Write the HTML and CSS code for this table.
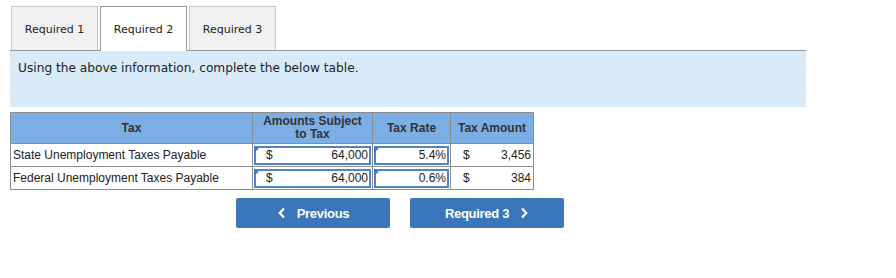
FILE: index.html
```html
<!DOCTYPE html>
<html>
<head>
<meta charset="utf-8">
<link rel="stylesheet" href="styles.css">
</head>
<body>
<div class="page">
  <div class="tabs">
    <div class="tab">Required 1</div>
    <div class="tab active">Required 2</div>
    <div class="tab">Required 3</div>
  </div>
  <div class="panel">Using the above information, complete the below table.</div>
  <table class="grid">
    <colgroup>
      <col class="c1"><col class="c2"><col class="c3"><col class="c4">
    </colgroup>
    <thead>
      <tr>
        <th>Tax</th>
        <th class="two">Amounts Subject<br>to Tax</th>
        <th>Tax Rate</th>
        <th>Tax Amount</th>
      </tr>
    </thead>
    <tbody>
      <tr>
        <td class="label">State Unemployment Taxes Payable</td>
        <td class="in"><div class="box"><span class="flag"></span><span class="cur">$</span><span class="num">64,000</span></div></td>
        <td class="in"><div class="box"><span class="flag"></span><span class="num">5.4%</span></div></td>
        <td class="out"><div class="val"><span class="cur">$</span><span class="num">3,456</span></div></td>
      </tr>
      <tr>
        <td class="label">Federal Unemployment Taxes Payable</td>
        <td class="in"><div class="box"><span class="flag"></span><span class="cur">$</span><span class="num">64,000</span></div></td>
        <td class="in"><div class="box"><span class="flag"></span><span class="num">0.6%</span></div></td>
        <td class="out"><div class="val"><span class="cur">$</span><span class="num">384</span></div></td>
      </tr>
    </tbody>
  </table>
  <div class="nav">
    <button class="btn"><svg width="10" height="12" viewBox="0 0 10 12"><path d="M7 1.5 L2.8 6 L7 10.5" fill="none" stroke="#fff" stroke-width="2.2"/></svg><span>Previous</span></button>
    <button class="btn"><span>Required 3</span><svg width="10" height="12" viewBox="0 0 10 12"><path d="M3 1.5 L7.2 6 L3 10.5" fill="none" stroke="#fff" stroke-width="2.2"/></svg></button>
  </div>
</div>
</body>
</html>
```

FILE: styles.css
```css
html, body {
  margin: 0;
  padding: 0;
  background: #fff;
}
.page {
  padding: 6px 0 0 10px;
  width: 796px;
}
.tabs {
  display: flex;
  gap: 2px;
  padding-left: 1px;
  border-bottom: 1px solid #999;
  height: 44px;
}
.tab {
  box-sizing: border-box;
  width: 87px;
  height: 44px;
  background: #f1f1f1;
  border: 1px solid #c6c6c6;
  border-bottom: none;
  font-family: "DejaVu Sans", Verdana, sans-serif;
  font-size: 11px;
  color: #222;
  display: flex;
  align-items: center;
  justify-content: center;
  padding-top: 1px;
}
.tab.active {
  background: #fff;
  border-color: #9a9a9a;
  height: 45px;
  margin-bottom: -1px;
}
.panel {
  background: #d9ebf9;
  height: 56px;
  box-sizing: border-box;
  padding: 10px 8px 0 8px;
  font-family: "DejaVu Sans", Verdana, sans-serif;
  font-size: 12.2px;
  color: #222;
}
.grid {
  margin-top: 5px;
  border-collapse: collapse;
  font-family: "Liberation Sans", Arial, sans-serif;
  font-size: 12px;
  color: #222;
  table-layout: fixed;
  width: 523px;
}
.c1 { width: 242px; }
.c2 { width: 120px; }
.c3 { width: 78px; }
.c4 { width: 83px; }
.grid th {
  background: #7baee5;
  border: 1px solid #8c8c8c;
  font-weight: bold;
  color: #333;
  height: 30px;
  padding: 0;
  line-height: 13px;
  text-align: center;
}
.grid td {
  border: 1px solid #8c8c8c;
  height: 20px;
  padding: 0;
}
.grid td.label {
  padding-left: 2px;
  white-space: nowrap;
}
.grid td.in {
  padding: 1px;
}
.box {
  position: relative;
  box-sizing: border-box;
  height: 19px;
  border: 2px solid #4f84c4;
  display: flex;
  align-items: center;
  padding: 0 1px 0 10px;
}
.flag {
  position: absolute;
  left: -2px;
  top: -2px;
  width: 0;
  height: 0;
  border-left: 5px solid #3d7ac4;
  border-top: 3px solid transparent;
  border-bottom: 3px solid transparent;
}
.cur {
  flex: none;
}
.num {
  flex: 1;
  text-align: right;
}
.val {
  display: flex;
  align-items: center;
  padding: 0 2px 0 12px;
}
.nav {
  display: flex;
  gap: 20px;
  padding-left: 226px;
  margin-top: 8px;
}
.btn {
  box-sizing: border-box;
  width: 154px;
  height: 30px;
  background: #3a76ba;
  border: none;
  border-radius: 2px;
  color: #fff;
  font-family: "Liberation Sans", Arial, sans-serif;
  font-weight: bold;
  font-size: 13px;
  letter-spacing: -0.3px;
  display: flex;
  align-items: center;
  justify-content: center;
  gap: 10px;
  padding: 0;
}
```
